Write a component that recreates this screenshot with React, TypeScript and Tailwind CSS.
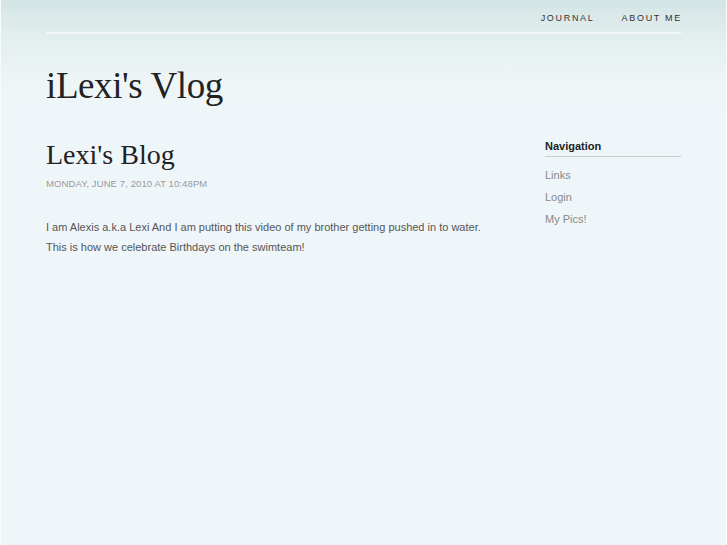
import React from 'react';

const sans = { fontFamily: '"Liberation Sans", Arial, sans-serif' };

const App: React.FC = () => {
  const links = ['Links', 'Login', 'My Pics!'];

  return (
    <div
      className="min-h-[545px] w-full border-x border-[#f7fbfc] bg-[#eff6f9] bg-[linear-gradient(to_bottom,#d4e5e5_0px,#e3eeef_40px,#eef5f7_80px,#eff6f9_110px)] font-['Liberation_Sans',Arial,sans-serif]"
    >
      <div className="mx-[45px]">
        <header>
          <nav className="flex h-[34px] items-center justify-end gap-[27px] border-b-2 border-[#f1f7f8] pt-[6px] text-[9px] tracking-[1.7px] text-[#333]">
            <a href="#">JOURNAL</a>
            <a href="#" className="mr-[-1px]">ABOUT ME</a>
          </nav>
          <h1 className="pt-[30px] font-['Liberation_Serif',serif] text-[37px] leading-[44px] tracking-[-0.4px] text-[#222]">
            iLexi's Vlog
          </h1>
        </header>

        <div className="mt-[28px] flex">
          <main className="w-[455px]">
            <h2 className="pt-[3px] font-['Liberation_Serif',serif] text-[28px] leading-[32px] text-[#222]">
              Lexi's Blog
            </h2>
            <div className="mt-[6px] text-[9.5px] tracking-[0.1px] text-[#999]" style={sans}>
              MONDAY, JUNE 7, 2010 AT 10:48PM
            </div>
            <div className="mt-[26px] text-[11px] leading-[20px] text-[#555]">
              <p>I am Alexis a.k.a Lexi And I am putting this video of my brother getting pushed in to water.</p>
              <p>This is how we celebrate Birthdays on the swimteam!</p>
            </div>
          </main>

          <aside className="ml-auto w-[136px] pt-[2px]">
            <h3 className="border-b border-[#c8cccd] pb-[2px] text-[11px] font-bold leading-[16px] text-[#222]">
              Navigation
            </h3>
            <ul className="mt-[7px] text-[11px] leading-[22px] text-[#888]">
              {links.map((l) => (
                <li key={l}>
                  <a href="#">{l}</a>
                </li>
              ))}
            </ul>
          </aside>
        </div>
      </div>
    </div>
  );
};

export default App;
